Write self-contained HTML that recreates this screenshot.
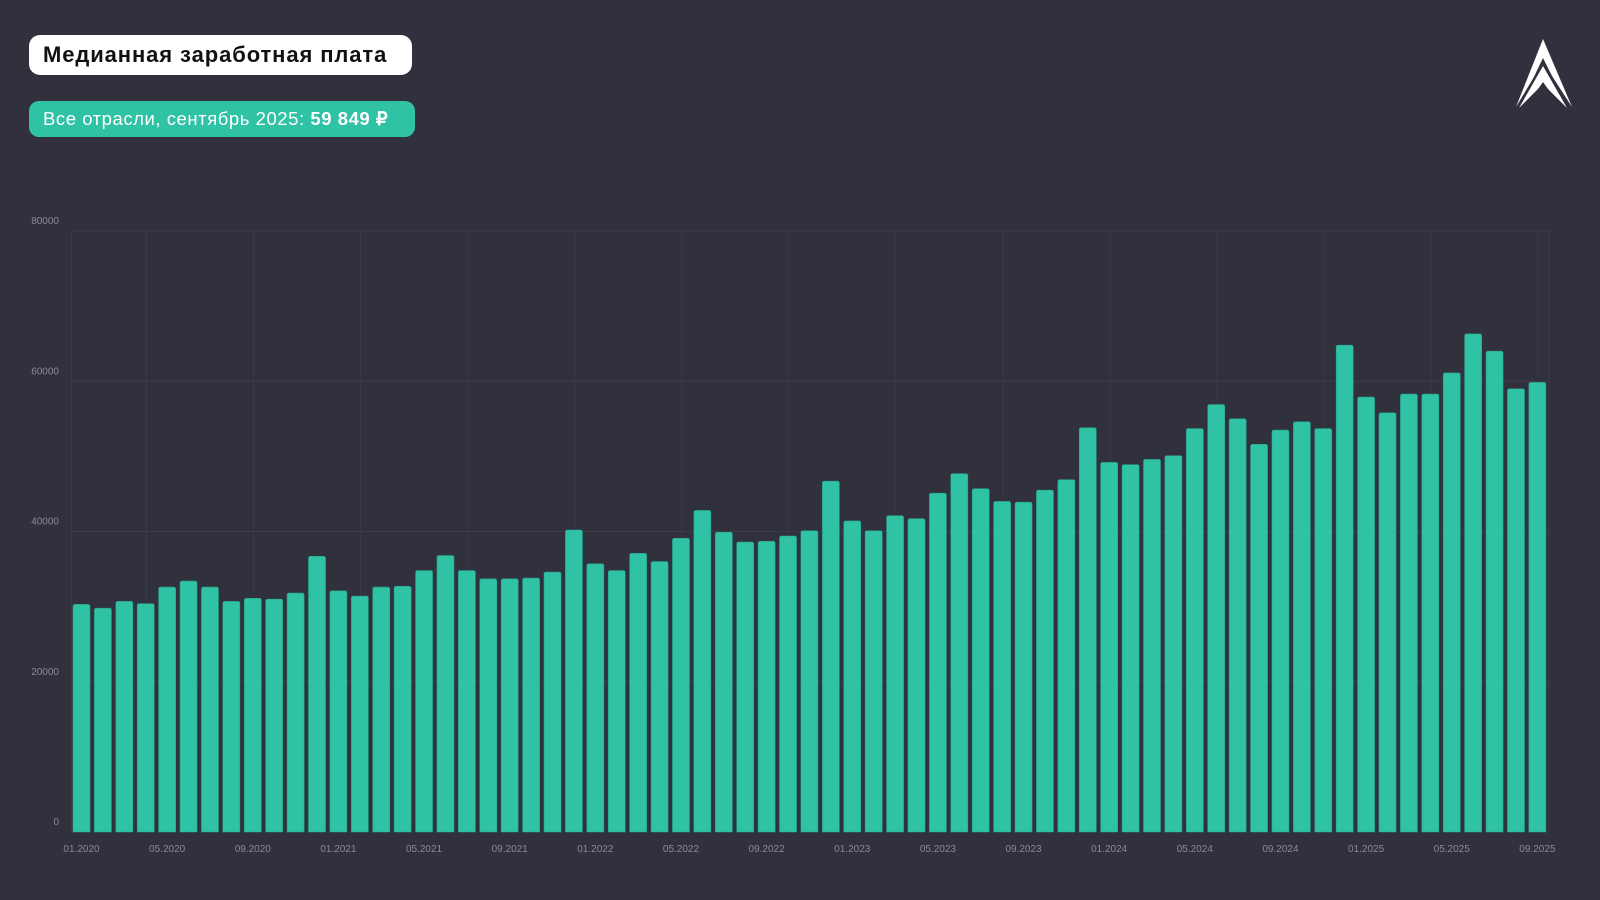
<!DOCTYPE html>
<html><head><meta charset="utf-8"><style>
body{margin:0;width:1600px;height:900px;background:#31313d;overflow:hidden;font-family:"Liberation Sans",sans-serif;position:relative}
.t1{position:absolute;left:29px;top:35px;width:383px;height:40px;background:#fff;border-radius:11px;box-sizing:border-box;font-weight:bold;font-size:22px;color:#111;line-height:40px;padding-left:14px;letter-spacing:0.9px;white-space:nowrap}
.t2{position:absolute;left:29px;top:101px;width:386px;height:36px;background:#2fc2a5;border-radius:10px;box-sizing:border-box;font-size:18.5px;color:#fff;line-height:36px;padding-left:14px;letter-spacing:0.55px;white-space:nowrap}
svg{position:absolute;left:0;top:0}
</style></head><body>
<div class="t1">Медианная заработная плата</div>
<div class="t2">Все отрасли, сентябрь 2025: <b>59 849 ₽</b></div>
<svg width="1600" height="900" id="c"></svg>
<svg width="1600" height="900" style="pointer-events:none">
<polygon points="1543,39 1572,107 1543,62 1516,107" fill="#fff"/>
<polygon points="1543,58 1568,108 1543,76 1519,108" fill="#31313d"/>
<polygon points="1543,66 1567,108 1543,84 1519,108" fill="#fff"/>
<polygon points="1543,82 1563,110 1543,92 1523,110" fill="#31313d"/>
</svg>
<script>
var v=[30.3,29.8,30.7,30.4,32.6,33.4,32.6,30.7,31.1,31.0,31.8,36.7,32.1,31.4,32.6,32.7,34.8,36.8,34.8,33.7,33.7,33.8,34.6,40.2,35.7,34.8,37.1,36.0,39.1,42.8,39.9,38.6,38.7,39.4,40.1,46.7,41.4,40.1,42.1,41.7,45.1,47.7,45.7,44.0,43.9,45.5,46.9,53.8,49.2,48.9,49.6,50.1,53.7,56.9,55.0,51.6,53.5,54.6,53.7,64.8,57.9,55.8,58.3,58.3,61.1,66.3,64.0,59.0,59.849];
var s='',B=832,sc=601/80000,x0=73,p=21.41,w=17;
for(var g=0;g<=4;g++){var y=B-g*20000*sc;if(g>0)s+='<line x1="71.5" x2="1549" y1="'+y+'" y2="'+y+'" stroke="#3d3d4a" stroke-width="1"/>';s+='<text x="59" y="'+(y-7)+'" text-anchor="end" font-size="10" fill="#8a8a95" font-family="Liberation Sans">'+(g*20000)+'</text>';}
s+='<line x1="71.5" x2="71.5" y1="231" y2="832" stroke="#3a3a47"/>';
for(var gx=146.5;gx<1549;gx+=107.05){s+='<line x1="'+gx+'" x2="'+gx+'" y1="231" y2="832" stroke="#3a3a47"/>';}
s+='<line x1="1549" x2="1549" y1="231" y2="832" stroke="#3a3a47"/>';
var L=['01.2020','05.2020','09.2020','01.2021','05.2021','09.2021','01.2022','05.2022','09.2022','01.2023','05.2023','09.2023','01.2024','05.2024','09.2024','01.2025','05.2025','09.2025'];
for(var i=0;i<69;i++){var h=v[i]*1000*sc,x=x0+i*p;
s+='<path d="M'+x+','+B+'V'+(B-h+2)+'q0,-2 2,-2h'+(w-4)+'q2,0 2,2V'+B+'Z" fill="#2fc2a5" stroke="#27a58c" stroke-width="0.6"/>';
if(i%4==0)s+='<text x="'+(x+w/2)+'" y="852" text-anchor="middle" font-size="10" fill="#8a8a95" font-family="Liberation Sans">'+L[i/4]+'</text>';}
document.getElementById('c').innerHTML=s;
</script>
</body></html>
